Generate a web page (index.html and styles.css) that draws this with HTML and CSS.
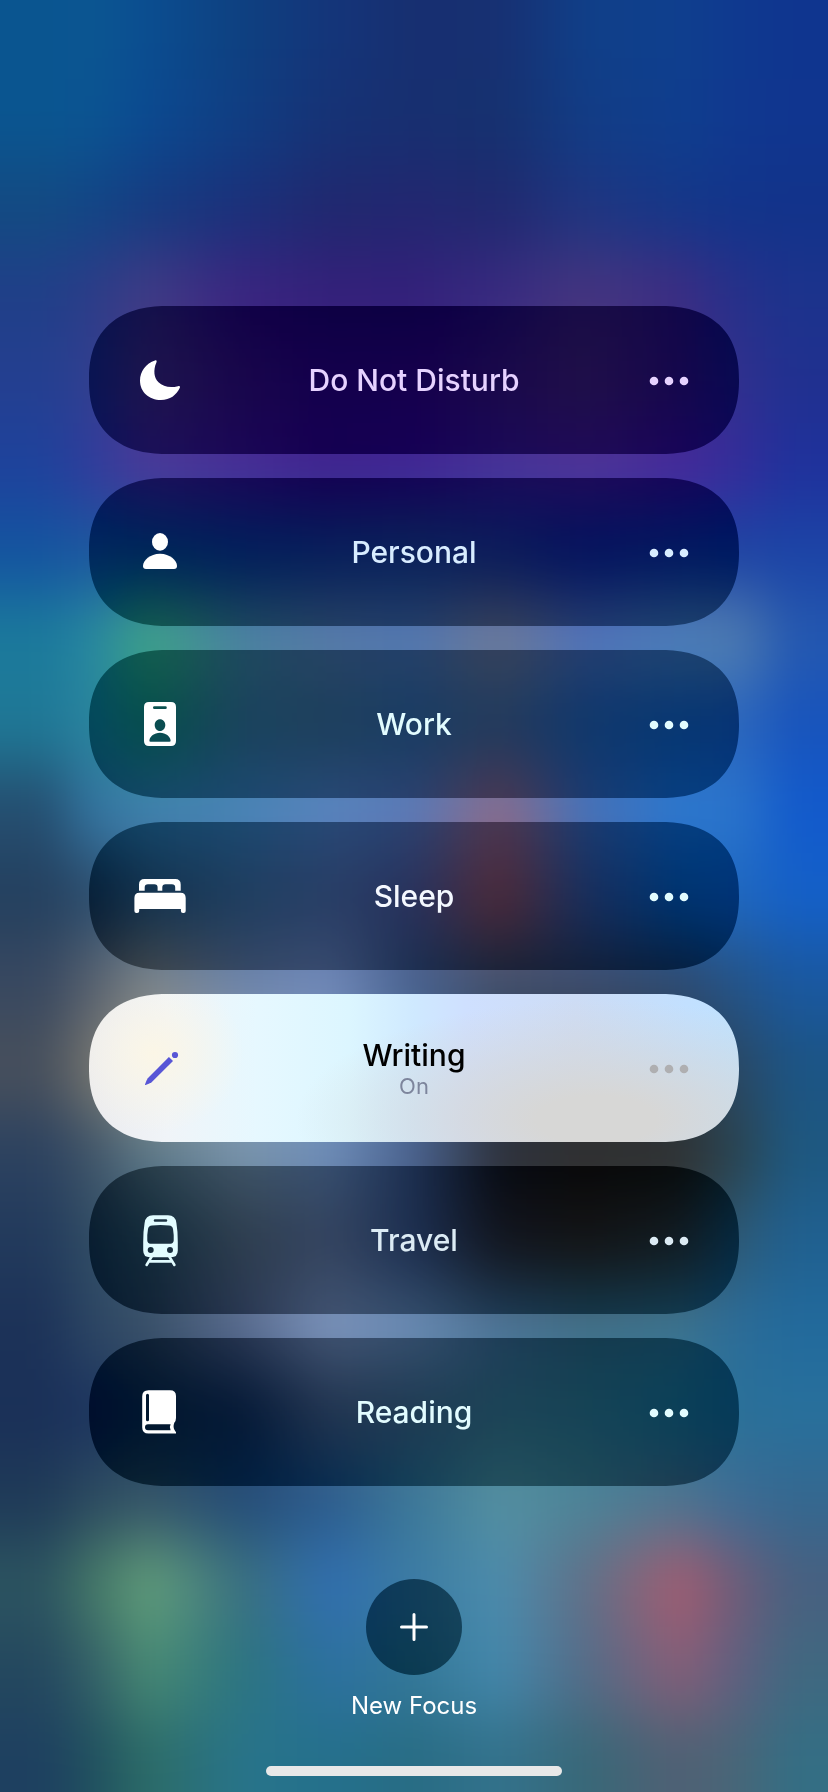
FILE: index.html
```html
<!DOCTYPE html>
<html lang="en">
<head>
<meta charset="utf-8">
<meta name="viewport" content="width=device-width, initial-scale=1">
<title>Focus</title>
<link rel="stylesheet" href="styles.css">
</head>
<body>
<svg class="defs" aria-hidden="true"><filter id="soften" x="0" y="0" width="1" height="1" color-interpolation-filters="sRGB"><feGaussianBlur stdDeviation="18 32"/></filter></svg>
<div class="backdrop" aria-hidden="true">
<i class="band b1"></i><i class="band b2"></i><i class="band b3"></i><i class="band b4"></i><i class="band b5"></i><i class="band b6"></i><i class="band b7"></i><i class="band b8"></i><i class="band b9"></i><i class="band b10"></i><i class="band b11"></i><i class="band b12"></i><i class="band b13"></i><i class="band b14"></i><i class="band b15"></i><i class="band b16"></i><i class="band b17"></i><i class="band b18"></i><i class="band b19"></i><i class="band b20"></i><i class="band b21"></i>
</div>
<main class="screen">
<ul class="modes">
<li class="mode violet">
<button class="toggle" aria-pressed="false">
<svg class="icon" viewBox="0 0 56 56"><path d="M23 8.4C24.6 7.9 25 8.9 24.4 10.4C21 18 22 26 26.5 30.3C31 35 38.5 36 46 34.2C48 33.8 48.5 34.7 47.7 36C44.5 43 38 48 29 48C17 48 8 40 8 28.5C8 19 14 11.5 23 8.4Z"/></svg>
<span class="label"><span class="name">Do Not Disturb</span></span>
</button>
<button class="more" aria-label="Do Not Disturb options"><svg class="dots" viewBox="0 0 40 12"><circle cx="5" cy="6" r="4.3"/><circle cx="20" cy="6" r="4.3"/><circle cx="35" cy="6" r="4.3"/></svg></button>
</li>
<li class="mode blue">
<button class="toggle" aria-pressed="false">
<svg class="icon" viewBox="0 0 56 56"><ellipse cx="28" cy="17.9" rx="8" ry="8.8"/><path d="M28 29.8C38 29.8 45 36.5 45 42C45 44 44 45 42 45H14C12 45 11 44 11 42C11 36.5 18 29.8 28 29.8Z"/></svg>
<span class="label"><span class="name">Personal</span></span>
</button>
<button class="more" aria-label="Personal options"><svg class="dots" viewBox="0 0 40 12"><circle cx="5" cy="6" r="4.3"/><circle cx="20" cy="6" r="4.3"/><circle cx="35" cy="6" r="4.3"/></svg></button>
</li>
<li class="mode">
<button class="toggle" aria-pressed="false">
<svg class="icon" viewBox="0 0 56 56"><path fill-rule="evenodd" d="M17 6H39Q44 6 44 11V45Q44 50 39 50H17Q12 50 12 45V11Q12 6 17 6ZM22.4 10.3A1.4 1.4 0 0 0 22.4 13.1H33.4A1.4 1.4 0 0 0 33.4 10.3ZM28 23.3C25 23.3 22.7 25.8 22.7 29C22.7 32.4 25 35 28 35S33.3 32.4 33.3 29C33.3 25.8 31 23.3 28 23.3ZM28 36.7C22 36.7 18 40.5 17.4 44.2Q17.2 45.7 18.6 45.7H37.4Q38.8 45.7 38.6 44.2C38 40.5 34 36.7 28 36.7Z"/></svg>
<span class="label"><span class="name">Work</span></span>
</button>
<button class="more" aria-label="Work options"><svg class="dots" viewBox="0 0 40 12"><circle cx="5" cy="6" r="4.3"/><circle cx="20" cy="6" r="4.3"/><circle cx="35" cy="6" r="4.3"/></svg></button>
</li>
<li class="mode">
<button class="toggle white" aria-pressed="false">
<svg class="icon" viewBox="0 0 56 56"><path d="M7 22.8V16.5Q7 11 12.5 11H43.2Q48.7 11 48.7 16.5V22.8H43.2V19.6Q43.2 16.3 39.9 16.3H33.6Q30.3 16.3 30.3 19.6V22.8H25.6V19.6Q25.6 16.3 22.3 16.3H16Q12.7 16.3 12.7 19.6V22.8Z"/><path d="M7.5 24.7H48.5Q53.7 24.7 53.7 30V43Q53.7 45 51.7 45H50.9Q48.9 45 48.9 43V41H7.2V43Q7.2 45 5.2 45H4.4Q2.4 45 2.4 43V30Q2.4 24.7 7.5 24.7Z"/></svg>
<span class="label"><span class="name">Sleep</span></span>
</button>
<button class="more" aria-label="Sleep options"><svg class="dots" viewBox="0 0 40 12"><circle cx="5" cy="6" r="4.3"/><circle cx="20" cy="6" r="4.3"/><circle cx="35" cy="6" r="4.3"/></svg></button>
</li>
<li class="mode active">
<button class="toggle" aria-pressed="true">
<svg class="icon" viewBox="0 0 56 56"><circle cx="43" cy="15" r="3.1"/><path d="M36.9 17L41 21.1L19.6 42.2Q17 43.9 13.6 45.1Q12.8 45.2 13 44.4Q14 41 15.8 38.2Z"/></svg>
<span class="label"><span class="name">Writing</span><span class="state">On</span></span>
</button>
<button class="more" aria-label="Writing options"><svg class="dots" viewBox="0 0 40 12"><circle cx="5" cy="6" r="4.3"/><circle cx="20" cy="6" r="4.3"/><circle cx="35" cy="6" r="4.3"/></svg></button>
</li>
<li class="mode gray">
<button class="toggle" aria-pressed="false">
<svg class="icon tint" viewBox="0 0 56 56"><path fill-rule="evenodd" d="M21 3.2H36Q43.5 3.2 44.4 11Q45.8 19 45.8 30V38.5Q45.8 45.3 39 45.3H18Q11.2 45.3 11.2 38.5V30Q11.2 19 12.6 11Q13.5 3.2 21 3.2ZM23 7.2A1.3 1.3 0 0 0 23 9.8H34A1.3 1.3 0 0 0 34 7.2ZM20 13.6Q16.6 13.8 16 17.1Q15 23 15.3 28.5Q15.5 31.6 18.5 31.7H38.5Q41.5 31.6 41.7 28.5Q42 23 41 17.1Q40.4 13.8 37 13.6Q28.5 12.4 20 13.6ZM18.7 35A3 3 0 1 0 18.7 41A3 3 0 1 0 18.7 35ZM38 35A3 3 0 1 0 38 41A3 3 0 1 0 38 35Z"/><path class="rail" d="M20 44L14.6 53M37 44L42.4 53M18 49.4H39"/></svg>
<span class="label"><span class="name">Travel</span></span>
</button>
<button class="more" aria-label="Travel options"><svg class="dots" viewBox="0 0 40 12"><circle cx="5" cy="6" r="4.3"/><circle cx="20" cy="6" r="4.3"/><circle cx="35" cy="6" r="4.3"/></svg></button>
</li>
<li class="mode">
<button class="toggle" aria-pressed="false">
<svg class="icon" viewBox="0 0 56 56"><path fill-rule="evenodd" d="M16.5 6.2H38Q44 6.2 44 12V34Q44 37 42.3 38.8Q40.8 43 42.4 45.8L44 48.2V49.6H16.5Q10.2 49.6 10.2 43.5V12.5Q10.2 6.2 16.5 6.2ZM15.5 9.7Q14 9.7 14 11.2V35.8Q14 37.3 15.5 37.3T17 35.8V11.2Q17 9.7 15.5 9.7ZM16 40.3A3 3 0 0 0 16 46.3H38.6Q37 43.3 38.6 40.3Z"/></svg>
<span class="label"><span class="name">Reading</span></span>
</button>
<button class="more" aria-label="Reading options"><svg class="dots" viewBox="0 0 40 12"><circle cx="5" cy="6" r="4.3"/><circle cx="20" cy="6" r="4.3"/><circle cx="35" cy="6" r="4.3"/></svg></button>
</li>
</ul>
<button class="new-focus">
<span class="plus"><svg class="plus-icon" viewBox="0 0 28 28"><path d="M14 1.5V26.5M1.5 14H26.5"/></svg></span>
<span>New Focus</span>
</button>
<div class="home-bar"></div>
</main>
</body>
</html>
```
FILE: styles.css
```css
* {
  box-sizing: border-box;
}

body {
  margin: 0;
  overflow-x: hidden;
  background: #1c3c70;
  color: #fff;
  font-family: Inter, "Liberation Sans", sans-serif;
}

.defs {
  position: absolute;
  width: 0;
  height: 0;
}

button {
  margin: 0;
  padding: 0;
  border: 0;
  background: none;
  color: inherit;
  font: inherit;
  cursor: pointer;
}

/* Blurred wallpaper: stacked colour bands, softened; it overhangs the window so the blur has no edge */
.backdrop {
  position: fixed;
  inset: -100px -60px;
  display: flex;
  flex-direction: column;
  filter: url(#soften);
}

.band {
  flex: 86 0 0;
  background: linear-gradient(90deg, var(--c));
}

.b1 { flex-grow: 179; --c: #0a5590 11%, #0b5692 16%, #0b4d90 22%, #0e4080 32%, #14357a 41%, #172f70 50%, #173072 59%, #103f88 68%, #0f3f8e 78%, #0f398f 84%, #0f358f 90%; }
.b2 { --c: #0a5590 11%, #0b5492 16%, #0b4990 22%, #103d82 32%, #163275 41%, #172f70 50%, #16316f 59%, #123c85 68%, #0f3e8e 78%, #10388f 84%, #10358f 90%; }
.b3 { --c: #134a82 11%, #124585 16%, #163b80 22%, #1b307a 32%, #20286f 41%, #222770 50%, #20296f 59%, #1f3580 68%, #153788 78%, #12348a 84%, #12338a 90%; }
.b4 { --c: #203f88 11%, #2c3c88 16%, #403a85 22%, #3a2480 32%, #34207a 41%, #33207a 50%, #382a80 59%, #45357f 68%, #3c2c82 78%, #26308a 84%, #1c338c 90%; }
.b5 { --c: #243f90 11%, #303f90 16%, #4c4088 22%, #442c86 32%, #3e2488 41%, #402488 50%, #463084 59%, #4e3882 68%, #402e86 78%, #30308e 84%, #20308f 90%; }
.b6 { --c: #1e429c 11%, #303c9c 16%, #4a389a 22%, #472c96 32%, #40228f 41%, #402494 50%, #463098 59%, #4e3298 68%, #45289a 78%, #342c9a 84%, #1f319c 90%; }
.b7 { --c: #1454a0 11%, #1c58a0 16%, #1f5498 22%, #244c9a 32%, #2c4c9a 41%, #305098 50%, #30489a 59%, #283c9e 68%, #2444a0 78%, #1d44a4 84%, #1c44a6 90%; }
.b8 { --c: #1b7a9c 11%, #2788a0 16%, #40a688 22%, #4c84a0 32%, #587ca8 41%, #5478b0 50%, #707c98 59%, #5475b8 68%, #4f80b8 78%, #4f7cb0 84%, #2458b0 90%; }
.b9 { --c: #1f7896 11%, #2a84a0 16%, #2a8a84 22%, #467a9c 32%, #4a769c 41%, #4472a4 50%, #50709c 59%, #386cb0 68%, #2c6ab8 78%, #2c66bc 84%, #1854bc 90%; }
.b10 { --c: #254e70 11%, #3374a0 16%, #4082b0 22%, #4884b8 32%, #5884c0 41%, #5c7ab8 50%, #8c6c8c 59%, #4872b8 68%, #2c78d0 78%, #2a74cc 84%, #125acc 90%; }
.b11 { --c: #24405f 11%, #2c4c6c 16%, #3c6488 22%, #4c74a0 32%, #5874a8 41%, #58649c 50%, #8a5a6c 59%, #44609c 68%, #2068b8 78%, #2068c0 84%, #1460c8 90%; }
.b12 { --c: #384860 11%, #56606e 16%, #7d8488 22%, #6c82a8 32%, #7088b8 41%, #46608c 50%, #40506c 59%, #3c4c6c 68%, #2e4a70 78%, #245488 84%, #1a58a0 90%; }
.b13 { --c: #48505c 11%, #74746f 16%, #a09c88 22%, #90a4b8 32%, #7c98c0 41%, #5070a0 50%, #303c50 59%, #30343c 68%, #2c3c4c 78%, #2a4864 84%, #1c5484 90%; }
.b14 { --c: #2c4260 11%, #3f5468 16%, #5c7888 22%, #7894ac 32%, #6c8cb8 41%, #48608c 50%, #2c303a 59%, #2e2e2e 68%, #2e3030 78%, #2a4450 84%, #1e5880 90%; }
.b15 { --c: #223a5c 11%, #304c64 16%, #3c5c70 22%, #60748a 32%, #687ca0 41%, #48608c 50%, #3c404c 59%, #3e3e40 68%, #3c4850 78%, #2c5a78 84%, #206090 90%; }
.b16 { --c: #1c3258 11%, #2c4664 16%, #3a5068 22%, #5a6c90 32%, #7c94bc 41%, #6a8cb4 50%, #4c7498 59%, #40708a 68%, #3c7490 78%, #2c6c98 84%, #226a9c 90%; }
.b17 { --c: #1a3058 11%, #1c3460 16%, #24405f 22%, #2a446a 32%, #50688c 41%, #4c7090 50%, #487c94 59%, #407c94 68%, #307898 78%, #2a7098 84%, #28709c 90%; }
.b18 { --c: #1f3a58 11%, #2c4a60 16%, #345468 22%, #244c78 32%, #2c5c8c 41%, #3c7898 50%, #5490a0 59%, #4c8498 68%, #4c7490 78%, #3c6c94 84%, #346890 90%; }
.b19 { --c: #2c5460 11%, #447868 16%, #629e7a 22%, #3a7080 32%, #306eb0 41%, #3c7ca4 50%, #4c8cac 59%, #607088 68%, #a45c70 78%, #705c78 84%, #486080 90%; }
.b20 { --c: #24485f 11%, #346068 16%, #488a74 22%, #2c7480 32%, #2c70a0 41%, #347898 50%, #4488ac 59%, #546c88 68%, #865e78 78%, #605f80 84%, #406880 90%; }
.b21 { flex-grow: 179; --c: #1e4060 11%, #20505f 16%, #2c6c68 22%, #28748a 32%, #24708c 41%, #286c84 50%, #33728c 59%, #386878 68%, #506074 78%, #486678 84%, #346e84 90%; }

.screen {
  position: relative;
  display: flex;
  flex-direction: column;
  align-items: center;
  min-height: 100vh;
  padding: 306px 89px 16px;
}

.modes {
  display: flex;
  flex-direction: column;
  gap: 24px;
  width: 100%;
  margin: 0 0 93px;
  padding: 0;
  list-style: none;
}

.mode {
  --tint: #e2fcff;
  display: grid;
  grid-template-columns: 142px 1fr 142px;
  height: 148px;
  overflow: hidden;
  border-radius: 80px / 74px;
  corner-shape: superellipse(1.26);
  backdrop-filter: contrast(1.4) brightness(0.55);
}

.violet { --tint: #e6d2ff; }
.blue { --tint: #d8ecff; }
.gray { --tint: #dcebf4; }

.toggle {
  grid-area: 1 / 1 / 2 / 4;
  display: grid;
  grid-template-columns: subgrid;
  align-items: center;
  justify-items: center;
}

.more {
  grid-area: 1 / 3;
  display: grid;
  place-items: center;
  padding: 2px 0 0 2px;
  color: var(--tint);
}

.icon {
  width: 56px;
  height: 56px;
  fill: #fff;
}

.tint { fill: #e2fcff; }

.rail {
  fill: none;
  stroke: #e2fcff;
  stroke-width: 2.6;
  stroke-linecap: round;
}

.dots {
  width: 40px;
  height: 12px;
  fill: currentColor;
}

.label {
  display: flex;
  flex-direction: column;
  align-items: center;
  color: var(--tint);
}

.white .label { color: #f4f8ff; }

.name {
  font-size: 30px;
  font-weight: 500;
  line-height: 36px;
}

.state {
  font-size: 22px;
  line-height: 26px;
  color: #7d859c;
}

.active {
  backdrop-filter: none;
  background:
    radial-gradient(90px 80px at 10% 40%, #fbf6e6, #fbf6e600),
    radial-gradient(300px 120px at 78% 85%, #d7d7d6 20%, #d7d7d600),
    linear-gradient(90deg, #ebebee, #f0f4f8 12%, #e6f8ff 26%, #dcf6ff 40%, #cfe9ff 50%, #cfe0ff 58%, #cddcf5 75%, #c2e0ff 92%, #bfe2ff);
}

.active .label { color: #000; }
.active .icon { fill: #5856d6; }
.active .more { color: #afafb1; }

.new-focus {
  display: flex;
  flex-direction: column;
  align-items: center;
  gap: 16px;
  font-size: 24px;
  line-height: 30px;
}

.plus {
  display: grid;
  place-items: center;
  width: 96px;
  height: 96px;
  border-radius: 50%;
  backdrop-filter: contrast(1.4) brightness(0.5);
}

.plus-icon {
  width: 28px;
  height: 28px;
  fill: none;
  stroke: #fff;
  stroke-width: 3;
  stroke-linecap: round;
}

.home-bar {
  width: 296px;
  height: 10px;
  margin-top: auto;
  border-radius: 5px;
  background: #e8e8e8;
}
```
